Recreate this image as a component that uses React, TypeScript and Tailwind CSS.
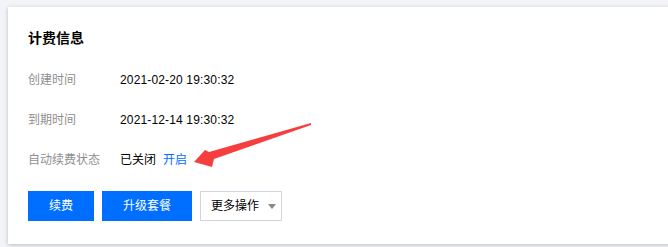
const font = "font-['Liberation_Sans','Noto_Sans_CJK_SC',sans-serif]"

// 计费信息卡片：标签 + 值 的三行，再加一排操作按钮
const rows = [
  { label: '创建时间', value: '2021-02-20 19:30:32' },
  { label: '到期时间', value: '2021-12-14 19:30:32' },
]

function Arrow() {
  return (
    <svg className="pointer-events-none absolute left-0 top-0" width="668" height="247" viewBox="0 0 668 247">
      <polygon
        points="194,162 205,150 209,152 311,123 311,125 214,159 212,167"
        fill="#f53f3f"
      />
    </svg>
  )
}

export default function App() {
  return (
    <div className={`relative h-[247px] w-[668px] overflow-hidden bg-[#f3f4f7] ${font}`}>
      <div className="ml-2 mt-[7px] w-[700px] bg-white pb-[23px] pl-5 pt-[21px] shadow-[0_1px_4px_rgba(54,58,80,0.3)]">
        <h2 className="text-[14px] font-bold leading-5 text-black">计费信息</h2>

        <div className="mt-[22px] flex flex-col gap-5 text-[12px] leading-5">
          {rows.map((r) => (
            <div key={r.label} className="flex">
              <span className="w-[92px] text-[#8f8f8f]">{r.label}</span>
              <span className="tracking-[0.15px] text-black">{r.value}</span>
            </div>
          ))}
          <div className="flex">
            <span className="w-[92px] text-[#8f8f8f]">自动续费状态</span>
            <span className="text-black">已关闭</span>
            <a className="ml-[7px] cursor-pointer text-[#006eff]">开启</a>
          </div>
        </div>

        <div className="mt-[21px] flex gap-2 text-[12px]">
          <button type="button" className="h-[30px] w-[66px] bg-[#006eff] text-white">
            续费
          </button>
          <button type="button" className="h-[30px] w-[90px] bg-[#006eff] text-white">
            升级套餐
          </button>
          <button
            type="button"
            className="flex h-[30px] w-[82px] items-center border border-[#cfd5de] pl-[10px] text-black"
          >
            更多操作
            <span className="ml-[9px] h-0 w-0 border-x-[4px] border-t-[5px] border-x-transparent border-t-[#888]" />
          </button>
        </div>
      </div>
      <Arrow />
    </div>
  )
}
